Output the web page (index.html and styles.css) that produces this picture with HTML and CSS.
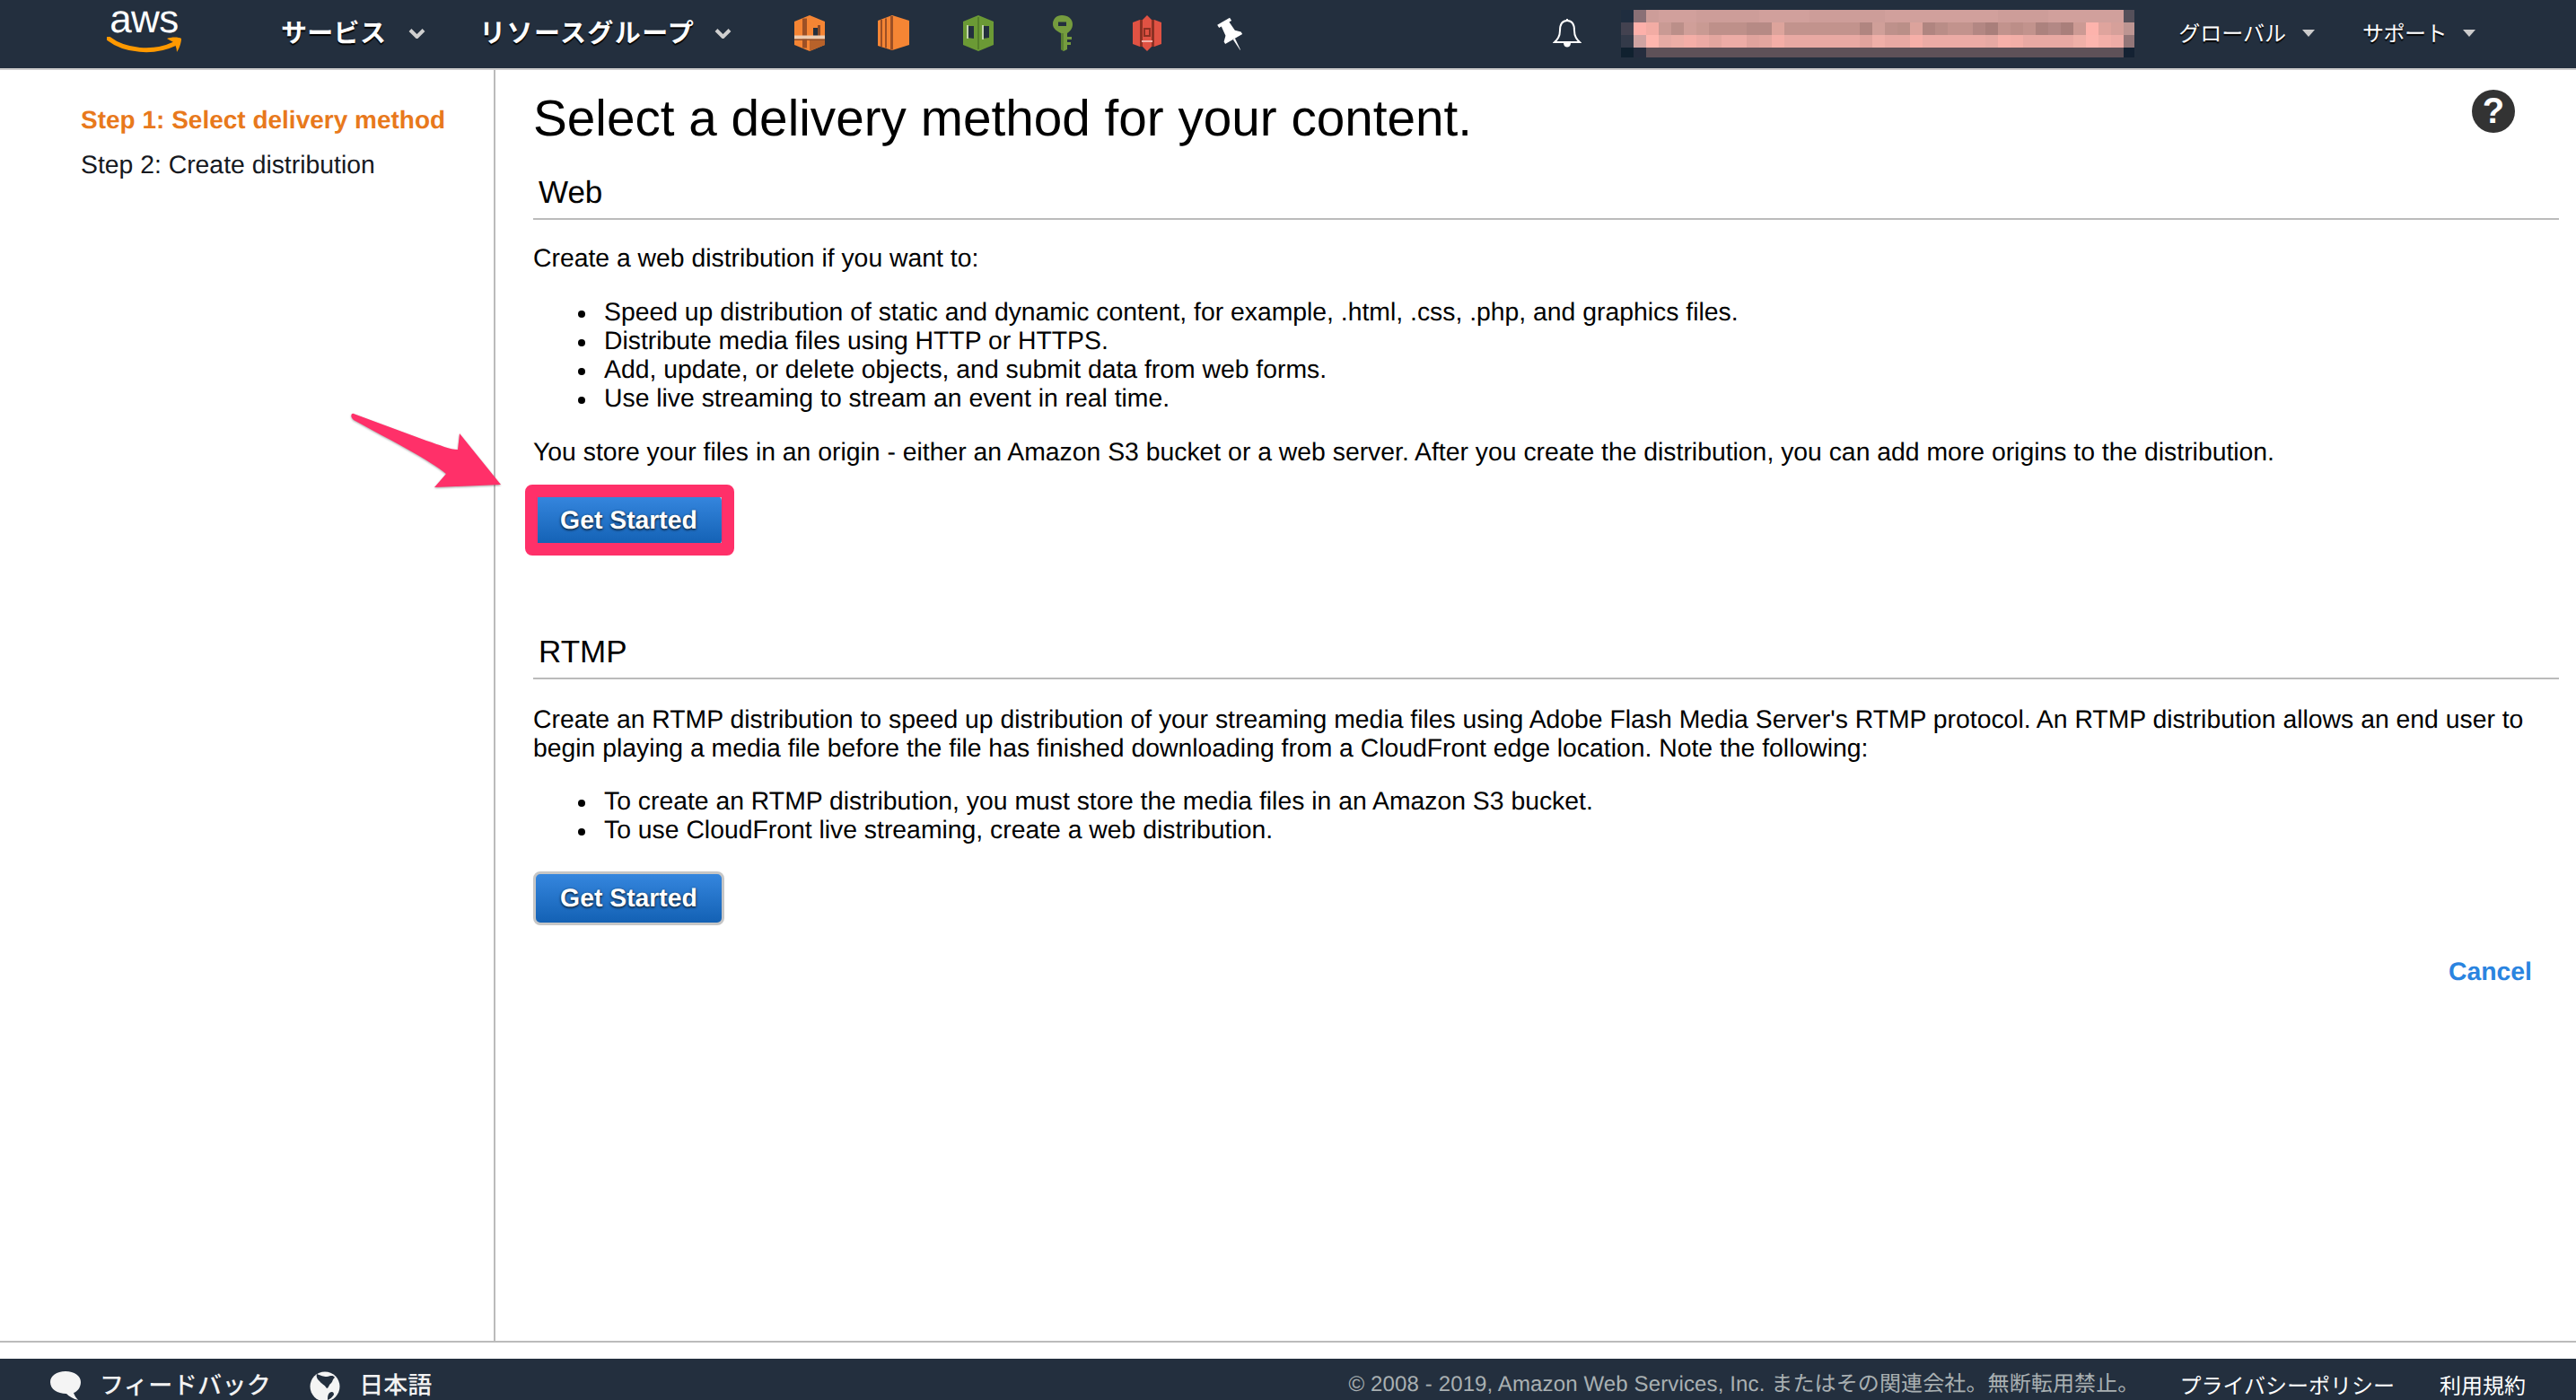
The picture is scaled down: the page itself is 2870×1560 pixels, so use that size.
FILE: index.html
```html
<!DOCTYPE html>
<html lang="ja">
<head>
<meta charset="utf-8">
<title>CloudFront</title>
<link rel="stylesheet" href="styles.css">
</head>
<body>
<header class="topbar">
  <a class="logo">
    <span class="logo-text">aws</span>
    <svg class="logo-smile" viewBox="0 0 83 18"><path d="M2 2C20 16 52 19 75 8" fill="none" stroke="#f90" stroke-width="5" stroke-linecap="round"/><path d="M67 2C72 0 80 0 83 2C83 6 81 13 78 17C78 12 76 8 74 6Z" fill="#f90"/></svg>
  </a>
  <span class="nav-item nav-first">サービス</span>
  <svg class="chev" viewBox="0 0 19 11"><path d="M2 1.500L9.500 9L17 1.500" fill="none" stroke="#cfcfcf" stroke-width="4"/></svg>
  <span class="nav-item nav-second">リソースグループ</span>
  <svg class="chev chev-tight" viewBox="0 0 19 11"><path d="M2 1.500L9.500 9L17 1.500" fill="none" stroke="#cfcfcf" stroke-width="4"/></svg>

  <div class="shortcuts">
    <svg class="svc" viewBox="0 0 36 40">
      <path d="M18 0L35 7V33L18 40L1 33V7Z" fill="#f58534"/>
      <path d="M10 3.500H15V36.500H10Z" fill="#9d5025"/>
      <path d="M18 23V5L30 10V23H27V14H22V23Z" fill="#f58534"/>
      <path d="M22 14H27V23H22Z" fill="#232f3e"/>
      <path d="M27 11H30V23H27Z" fill="#8a4a26"/>
      <path d="M18 28H35V33L18 40Z" fill="#b8622a"/>
      <path d="M1 22.500H35V26.500H1Z" fill="#ecccb2"/>
      <path d="M1 26.500H35V28H1Z" fill="#8f4f2a"/>
    </svg>
    <svg class="svc" viewBox="0 0 36 40">
      <path d="M16 0L35 6V33L16 39L0 34V6Z" fill="#f58534"/>
      <path d="M3 5H5V35H3ZM8 3.500H10V36.500H8ZM14 1H17V38.500H14Z" fill="#9d5025"/>
    </svg>
    <svg class="svc" viewBox="0 0 36 40">
      <path d="M18 0L35 7V33L18 40L1 33V7Z" fill="#6b9a35"/>
      <path d="M17 2H19V38H17Z" fill="#55802a"/>
      <path d="M6 12H13V26L6 25Z" fill="#232f3e"/>
      <path d="M23 12H30V25L23 26Z" fill="#232f3e"/>
      <path d="M5 11H7V26H5ZM22 11H24V27H22Z" fill="#c3d4ad"/>
    </svg>
    <svg class="svc" viewBox="0 0 36 40">
      <path d="M17 0C24 0 29 4 29 10C29 15 26 18 23 20V24H28V27H23V30H27V33H23V38L19 40L16 38V20C12 18 7 15 7 10C7 4 11 0 17 0Z" fill="#759c3e"/>
      <path d="M13 7.500H22V12H13Z" fill="#232f3e"/>
      <path d="M16 20V38L19 40V20Z" fill="#5b8232"/>
    </svg>
    <svg class="svc" viewBox="0 0 36 40">
      <path d="M2 8L10 5V35L2 32ZM26 5L34 8V32L26 35Z" fill="#e05243"/>
      <path d="M12 6L18 0L24 6V34L18 40L12 34Z" fill="#e05243"/>
      <path d="M10 5H13V35H10ZM23 5H26V35H23Z" fill="#8c3123"/>
      <path d="M14 14H22V24H14Z" fill="#8c3123"/>
      <path d="M16 16H20V22H16Z" fill="#e05243"/>
      <path d="M12 28H24V30H12Z" fill="#f2b0a8"/>
    </svg>
    <svg class="svc svc-sharp" viewBox="0 0 36 40">
      <g transform="rotate(-30 18 20)" fill="#fff">
        <path d="M9 4H25V8H22L23 19L28 24V27H6V24L11 19L12 8H9Z"/>
        <path d="M16 27H18.500L17.500 41H17Z"/>
      </g>
    </svg>
  </div>

  <div class="topbar-right">
    <svg class="bell" viewBox="0 0 32 34"><path d="M16 3C10 3 8 8 8 14C8 21 5 24 2 27H30C27 24 24 21 24 14C24 8 22 3 16 3Z" fill="none" stroke="#fff" stroke-width="2"/><path d="M15 1H17V4H15Z" fill="#fff"/><path d="M12 28C12 34 20 34 20 28Z" fill="#fff"/></svg>
    <svg class="mosaic" viewBox="0 0 572 53" shape-rendering="crispEdges">
      <rect y="0" width="572" height="14" fill="#d1a09c"/>
      <rect y="14" width="572" height="14" fill="#c2938d"/>
      <rect y="28" width="572" height="14" fill="#e8a9a3"/>
      <rect y="42" width="572" height="11" fill="#5e5158"/>
      <g fill="#cd9d99"><rect x="28" width="14" height="14"/><rect x="84" width="70" height="14"/><rect x="210" width="84" height="14"/><rect x="420" width="56" height="14"/></g>
      <rect width="14" height="14" fill="#1f2d3f"/><rect x="14" width="14" height="14" fill="#8a7076"/><rect x="560" width="12" height="14" fill="#55505a"/>
      <rect y="14" width="14" height="14" fill="#434250"/><rect x="14" y="14" width="14" height="14" fill="#fdb0aa"/><rect x="28" y="14" width="14" height="14" fill="#f2aca4"/><rect x="42" y="14" width="14" height="14" fill="#c99a94"/><rect x="56" y="14" width="14" height="14" fill="#bb8f89"/><rect x="70" y="14" width="14" height="14" fill="#d09f99"/><rect x="84" y="14" width="14" height="14" fill="#c99a93"/><rect x="98" y="14" width="42" height="14" fill="#be908a"/><rect x="140" y="14" width="28" height="14" fill="#b68a85"/><rect x="168" y="14" width="14" height="14" fill="#dda49c"/><rect x="266" y="14" width="14" height="14" fill="#b08580"/><rect x="280" y="14" width="14" height="14" fill="#d09f99"/><rect x="294" y="14" width="14" height="14" fill="#be918b"/><rect x="308" y="14" width="14" height="14" fill="#ba8f88"/><rect x="322" y="14" width="14" height="14" fill="#dca39c"/><rect x="336" y="14" width="14" height="14" fill="#b08580"/><rect x="350" y="14" width="14" height="14" fill="#b98d87"/><rect x="392" y="14" width="14" height="14" fill="#b38783"/><rect x="406" y="14" width="14" height="14" fill="#a97f7b"/><rect x="434" y="14" width="14" height="14" fill="#bc8e88"/><rect x="462" y="14" width="14" height="14" fill="#ac827e"/><rect x="476" y="14" width="14" height="14" fill="#b38885"/><rect x="490" y="14" width="14" height="14" fill="#a97f7b"/><rect x="504" y="14" width="14" height="14" fill="#cc9a94"/><rect x="518" y="14" width="14" height="14" fill="#fdb3ac"/><rect x="532" y="14" width="14" height="14" fill="#dfa49d"/><rect x="546" y="14" width="14" height="14" fill="#d6a09a"/><rect x="560" y="14" width="12" height="14" fill="#bd9592"/>
      <rect y="28" width="14" height="14" fill="#333a49"/><rect x="14" y="28" width="14" height="14" fill="#cfa3a2"/><rect x="28" y="28" width="14" height="14" fill="#feb6ae"/><rect x="42" y="28" width="14" height="14" fill="#e6aba4"/><rect x="56" y="28" width="14" height="14" fill="#ecaea6"/><rect x="70" y="28" width="14" height="14" fill="#f4aea7"/><rect x="84" y="28" width="14" height="14" fill="#ecaaa4"/><rect x="98" y="28" width="14" height="14" fill="#e3a69f"/><rect x="112" y="28" width="28" height="14" fill="#ecaca6"/><rect x="140" y="28" width="14" height="14" fill="#dfa39d"/><rect x="154" y="28" width="14" height="14" fill="#e3a69f"/><rect x="168" y="28" width="14" height="14" fill="#f4aea7"/><rect x="266" y="28" width="14" height="14" fill="#e0a39d"/><rect x="280" y="28" width="14" height="14" fill="#efafa8"/><rect x="322" y="28" width="14" height="14" fill="#f6afa8"/><rect x="336" y="28" width="70" height="14" fill="#ebaba5"/><rect x="406" y="28" width="14" height="14" fill="#e6a9a3"/><rect x="420" y="28" width="14" height="14" fill="#f6b0a9"/><rect x="434" y="28" width="14" height="14" fill="#f2aea7"/><rect x="504" y="28" width="14" height="14" fill="#efb0a8"/><rect x="518" y="28" width="14" height="14" fill="#fcb5ae"/><rect x="532" y="28" width="14" height="14" fill="#f3afa8"/><rect x="546" y="28" width="14" height="14" fill="#eeaca6"/><rect x="560" y="28" width="12" height="14" fill="#937678"/>
      <rect y="42" width="14" height="11" fill="#10212f"/><rect x="14" y="42" width="14" height="11" fill="#252d3e"/><rect x="560" y="42" width="12" height="11" fill="#142233"/>
    </svg>
    <span class="nav-small nav-global">グローバル</span>
    <svg class="caret" viewBox="0 0 14 8"><path d="M0 0H14L7 8Z" fill="#ccc"/></svg>
    <span class="nav-small nav-support">サポート</span>
    <svg class="caret" viewBox="0 0 14 8"><path d="M0 0H14L7 8Z" fill="#ccc"/></svg>
  </div>
</header>

<div class="layout">
  <aside class="sidebar">
    <div class="step step-active">Step 1: Select delivery method</div>
    <div class="step">Step 2: Create distribution</div>
  </aside>
  <main class="content">
    <div class="title-row">
      <h1 class="title">Select a delivery method for your content.</h1>
      <span class="help">?</span>
    </div>

    <h2 class="section-title">Web</h2>
    <p class="para para-first">Create a web distribution if you want to:</p>
    <ul class="list">
      <li>Speed up distribution of static and dynamic content, for example, .html, .css, .php, and graphics files.</li>
      <li>Distribute media files using HTTP or HTTPS.</li>
      <li>Add, update, or delete objects, and submit data from web forms.</li>
      <li>Use live streaming to stream an event in real time.</li>
    </ul>
    <p class="para">You store your files in an origin - either an Amazon S3 bucket or a web server. After you create the distribution, you can add more origins to the distribution.</p>
    <div class="button-wrap">
      <a class="button">Get Started</a>
      <span class="highlight"></span>
    </div>

    <h2 class="section-title section-rtmp">RTMP</h2>
    <p class="para para-first para-rtmp">Create an RTMP distribution to speed up distribution of your streaming media files using Adobe Flash Media Server's RTMP protocol. An RTMP distribution allows an end user to begin playing a media file before the file has finished downloading from a CloudFront edge location. Note the following:</p>
    <ul class="list list-rtmp">
      <li>To create an RTMP distribution, you must store the media files in an Amazon S3 bucket.</li>
      <li>To use CloudFront live streaming, create a web distribution.</li>
    </ul>
    <div class="button-wrap">
      <a class="button">Get Started</a>
    </div>
    <div class="cancel-row"><a class="cancel">Cancel</a></div>
  </main>
  <svg class="arrow" viewBox="0 0 170 90"><path d="M4 1L85 31C100 36 112 41 120 41L122 23L168 80L94 83L107 68C85 50 40 28 4 8C0 5 1 0 4 1Z" fill="#ff3069"/></svg>
</div>

<footer class="footer">
  <svg class="foot-icon foot-bubble" viewBox="0 0 34 32"><path d="M17 0C27 0 34 5 34 12C34 18 30 23 26 24C27 27 29 30 31 32C26 31 21 28 18 25C8 25 0 20 0 12C0 5 7 0 17 0Z" fill="#f4f4f4"/></svg>
  <span class="foot-link foot-feedback">フィードバック</span>
  <svg class="foot-icon foot-globe" viewBox="0 0 34 32"><circle cx="17" cy="17" r="16.500" fill="#f4f4f4"/><path d="M8 3C13 5 15 6 19 6C24 5 26 4 28 7C25 9 26 12 23 14C21 16 21 19 19 19C17 15 13 14 11 11C9 9 7 7 8 3ZM22 24C25 22 27 23 27 26C25 29 23 31 20 32C20 29 20 26 22 24Z" fill="#232f3e"/></svg>
  <span class="foot-link foot-lang">日本語</span>
  <span class="copyright">© 2008 - 2019, Amazon Web Services, Inc. またはその関連会社。無断転用禁止。</span>
  <span class="foot-small foot-privacy">プライバシーポリシー</span>
  <span class="foot-small foot-terms">利用規約</span>
</footer>
</body>
</html>
```
FILE: styles.css
```css
* { box-sizing: border-box; }
html {
  margin: 0;
  padding: 0;
  width: 2870px;
  height: 1560px;
  overflow: hidden;
}
body {
  margin: 0;
  padding: 0;
  width: 2870px;
  height: 1560px;
  overflow: hidden;
  display: flex;
  flex-direction: column;
  background: #fff;
  color: #000;
  font-family: "Liberation Sans", "Noto Sans CJK JP", sans-serif;
  font-size: 28.350px;
  line-height: 32px;
  text-rendering: geometricPrecision;
}

/* top bar */
.topbar {
  flex: none;
  height: 78px;
  display: flex;
  align-items: center;
  padding: 0 112px 2px 119px;
  background: #232f3e;
  border-bottom: 2px solid #ccc;
}
.logo { width: 83px; display: flex; flex-direction: column; align-items: center; }
.logo-text { color: #fff; font-size: 44px; line-height: 34px; height: 34px; letter-spacing: -0.5px; margin-top: -10px; }
.logo-smile { width: 83px; height: 18px; margin-top: 2px; }
.nav-item {
  color: #fff;
  font-family: "Noto Sans CJK JP", sans-serif;
  font-size: 29px;
  font-weight: 700;
  line-height: 40px;
  margin-top: -4px;
  text-shadow: 0 2px 1px #000;
  letter-spacing: 0.3px;
}
.nav-first { margin-left: 111px; }
.nav-second { margin-left: 60px; letter-spacing: 1.400px; }
.chev { width: 19px; height: 11px; margin-left: 25px; flex: none; }
.chev-tight { margin-left: 22px; }
.shortcuts { display: flex; gap: 58px; margin-left: 69px; }
.svc { width: 36px; height: 40px; flex: none; filter: blur(0.6px); }
.svc-sharp { filter: none; }
.topbar-right { margin-left: auto; display: flex; align-items: center; }
.bell { width: 32px; height: 34px; flex: none; }
.mosaic { width: 572px; height: 53px; margin-left: 44px; flex: none; }
.nav-small {
  color: #fff;
  font-family: "Noto Sans CJK JP", sans-serif;
  font-size: 24px;
  line-height: 32px;
  margin-top: -3px;
  text-shadow: 0 2px 1px #000;
}
.nav-global { margin-left: 49px; }
.nav-support { margin-left: 53px; letter-spacing: -0.5px; }
.caret { width: 14px; height: 8px; margin-left: 18px; flex: none; }

/* layout */
.layout {
  position: relative;
  flex: 1;
  min-height: 0;
  display: flex;
  border-bottom: 2px solid #bbb;
}
.sidebar {
  flex: none;
  width: 552px;
  padding: 40px 0 0 90px;
  border-right: 2px solid #bbb;
}
.step { height: 32px; margin-bottom: 18px; color: #16191f; }
.step-active { color: #e8791c; font-weight: 700; font-size: 28px; }
.content { flex: 1; min-width: 0; padding: 22px 19px 0 42px; }
.title-row { display: flex; justify-content: space-between; align-items: flex-start; height: 64px; }
.title { margin: 0; font-size: 56.700px; line-height: 66px; font-weight: 400; }
.help {
  width: 48px;
  height: 48px;
  margin-right: 49px;
  border-radius: 50%;
  background: #333;
  color: #fff;
  font-weight: 700;
  font-size: 40px;
  line-height: 48px;
  text-align: center;
}
.section-title {
  margin: 28px 0 0;
  height: 53px;
  padding: 0 0 6px 6px;
  border-bottom: 2px solid #bbb;
  font-size: 35px;
  line-height: 45px;
  font-weight: 400;
}
.section-rtmp { margin-top: 94px; }
.para { margin: 28px 0 0; }
.para-first { margin-top: 27px; }
.para-rtmp { margin-top: 29px; padding-right: 10px; }
.list { margin: 28px 0 0; padding: 0 0 0 79px; list-style: none; }
.list li { position: relative; }
.list li::before {
  content: "";
  position: absolute;
  left: -29px;
  top: 14px;
  width: 8px;
  height: 8px;
  border-radius: 50%;
  background: #000;
}
.list-rtmp { margin-top: 27px; }
.button-wrap { position: relative; width: 213px; height: 60px; margin-top: 30px; }
.button {
  display: block;
  height: 60px;
  border: 3px solid #c6c6c6;
  border-radius: 8px;
  background: linear-gradient(#3586de, #1361b4);
  color: #fff;
  font-weight: 700;
  line-height: 55px;
  text-align: center;
  text-shadow: 0 1px 3px #000;
}
.highlight {
  position: absolute;
  left: -9px;
  top: -10px;
  width: 233px;
  height: 79px;
  border: 14px solid #ff3069;
  border-radius: 8px;
}
.cancel-row { margin-top: 36px; padding-right: 30px; text-align: right; }
.cancel { color: #2a84e0; font-weight: 700; }
.arrow {
  position: absolute;
  left: 390px;
  top: 382px;
  width: 170px;
  height: 90px;
  overflow: visible;
  filter: drop-shadow(0 1px 1px rgba(0, 0, 0, 0.35));
}

/* footer */
.footer {
  flex: none;
  height: 46px;
  margin-top: 18px;
  display: flex;
  align-items: flex-start;
  background: #232f3e;
  padding-left: 56px;
  overflow: hidden;
}
.foot-icon { width: 34px; height: 32px; margin-top: 14px; flex: none; }
.foot-link {
  color: #f2f2f2;
  font-family: "Noto Sans CJK JP", sans-serif;
  font-size: 27px;
  font-weight: 500;
  line-height: 36px;
  margin-top: 10px;
}
.foot-feedback { margin-left: 21px; letter-spacing: 0.400px; }
.foot-globe { margin-left: 43px; }
.foot-lang { margin-left: 21px; }
.copyright {
  margin-left: auto;
  color: #a9b0b2;
  font-size: 24px;
  line-height: 32px;
  margin-top: 13px;
  letter-spacing: 0.130px;
}
.foot-small {
  color: #fff;
  font-family: "Noto Sans CJK JP", sans-serif;
  font-size: 24px;
  line-height: 32px;
  margin-top: 13px;
}
.foot-privacy { margin-left: 45px; }
.foot-terms { margin-left: 50px; margin-right: 56px; }
```
